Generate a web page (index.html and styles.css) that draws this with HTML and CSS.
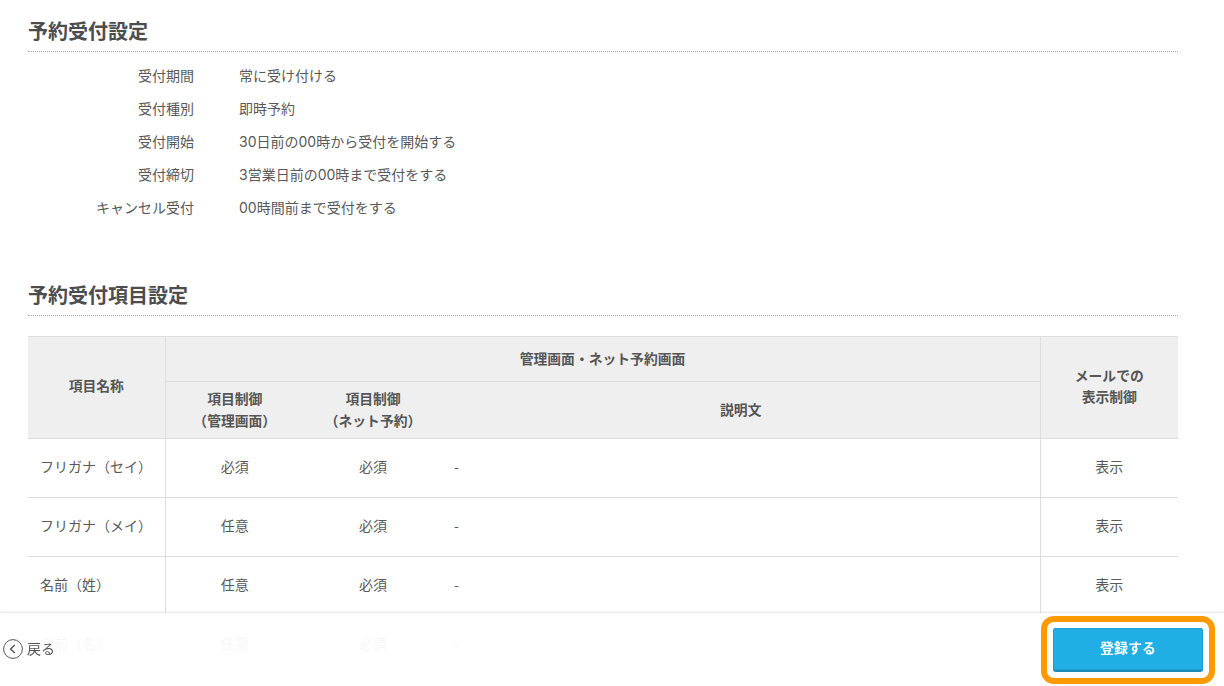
FILE: index.html
```html
<!DOCTYPE html>
<html lang="ja">
<head>
<meta charset="utf-8">
<title>予約受付設定</title>
<link rel="stylesheet" href="styles.css">
</head>
<body>
<main class="page">
  <section class="sec sec-first">
    <h2 class="heading">予約受付設定</h2>
    <dl class="settings">
      <div class="set-row"><dt>受付期間</dt><dd>常に受け付ける</dd></div>
      <div class="set-row"><dt>受付種別</dt><dd>即時予約</dd></div>
      <div class="set-row"><dt>受付開始</dt><dd>30日前の00時から受付を開始する</dd></div>
      <div class="set-row"><dt>受付締切</dt><dd>3営業日前の00時まで受付をする</dd></div>
      <div class="set-row"><dt>キャンセル受付</dt><dd>00時間前まで受付をする</dd></div>
    </dl>
  </section>
  <section class="sec sec-second">
    <h2 class="heading">予約受付項目設定</h2>
    <table class="items">
      <colgroup>
        <col class="c1"><col class="c2"><col class="c3"><col class="c4"><col class="c5">
      </colgroup>
      <thead>
        <tr class="h1">
          <th rowspan="2" class="rb pull">項目名称</th>
          <th colspan="3" class="rb raise">管理画面・ネット予約画面</th>
          <th rowspan="2" class="mail">メールでの<br>表示制御</th>
        </tr>
        <tr class="h2">
          <th class="raise two">項目制御<br>（管理画面）</th>
          <th class="raise two">項目制御<br>（ネット予約）</th>
          <th class="rb raise">説明文</th>
        </tr>
      </thead>
      <tbody>
        <tr><td class="name rb">フリガナ（セイ）</td><td>必須</td><td>必須</td><td class="desc rb">-</td><td>表示</td></tr>
        <tr><td class="name rb">フリガナ（メイ）</td><td>任意</td><td>必須</td><td class="desc rb">-</td><td>表示</td></tr>
        <tr><td class="name rb">名前（姓）</td><td>任意</td><td>必須</td><td class="desc rb">-</td><td>表示</td></tr>
        <tr><td class="name rb">名前（名）</td><td>任意</td><td>必須</td><td class="desc rb">-</td><td>表示</td></tr>
      </tbody>
    </table>
  </section>
</main>
<footer class="bar">
  <a class="back" href="#">
    <svg class="back-icon" width="20" height="20" viewBox="0 0 20 20" aria-hidden="true">
      <circle cx="10" cy="10" r="9.4" fill="none" stroke="#555" stroke-width="1"/>
      <path d="M11.8 6 L7.6 10 L11.8 14" fill="none" stroke="#555" stroke-width="1.4"/>
    </svg>
    <span class="back-label">戻る</span>
  </a>
  <div class="submit-wrap">
    <button class="submit" type="button">登録する</button>
  </div>
</footer>
</body>
</html>
```
FILE: styles.css
```css
* { box-sizing: border-box; }
html, body { margin: 0; height: 100%; overflow: hidden; background: #fff; }
body {
  font-family: "Noto Sans CJK JP", "Liberation Sans", sans-serif;
  font-size: 14px;
  color: #595959;
}
.page { padding: 0 46px 0 28px; }
.sec-first { padding-top: 18px; }
.sec-second { padding-top: 59px; }
.heading {
  margin: 0;
  height: 34px;
  font-size: 20px;
  line-height: 25px;
  font-weight: 700;
  color: #4d4d4d;
  border-bottom: 1px dotted #aaa;
}
.settings { margin: 6px 0 0; }
.set-row { display: flex; height: 33px; align-items: center; }
.set-row dt { width: 166px; text-align: right; }
.set-row dd {
  margin: 0 0 0 45px;
  font-family: Inter, "Noto Sans CJK JP", sans-serif;
}
.items {
  margin-top: 20px;
  width: 1150px;
  table-layout: fixed;
  border-collapse: collapse;
  border-top: 1px solid #ddd;
}
.c1 { width: 137px; }
.c2 { width: 139px; }
.c3 { width: 138px; }
.c4 { width: 598px; }
.c5 { width: 138px; }
th {
  background: #efefef;
  font-weight: 700;
  font-size: 13.8px;
  line-height: 25px;
  padding: 0;
  text-align: center;
  border-bottom: 1px solid #ddd;
  color: #555;
}
.h1 th { height: 45px; }
.h2 th { height: 57px; }
.pull { padding-bottom: 4px; }
th.raise { padding-bottom: 2px; }
th.two { line-height: 22px; }
th.mail { line-height: 21px; padding-bottom: 4px; }
td {
  height: 59px;
  padding: 0 0 4px;
  text-align: center;
  border-bottom: 1px solid #ddd;
}
.rb { border-right: 1px solid #ddd; }
td.name { text-align: left; padding-left: 12px; }
td.desc { text-align: left; padding-left: 12px; }
.bar {
  position: fixed;
  left: 0;
  right: 0;
  bottom: 0;
  height: 73px;
  display: flex;
  justify-content: space-between;
  align-items: flex-start;
  background: rgba(255, 255, 255, 0.95);
  box-shadow: 0 -1px 2px rgba(0, 0, 0, 0.1);
}
.back {
  display: flex;
  align-items: center;
  gap: 4px;
  margin: 26px 0 0 3px;
  color: #555;
  text-decoration: none;
  line-height: 20px;
}
.back-label { margin-top: -3px; }
.submit-wrap {
  margin: 3px 9px 0 0;
  padding: 6px;
  border: 6px solid #ff9900;
  border-radius: 13px;
  background: #fff;
}
.submit {
  display: block;
  width: 150px;
  height: 44px;
  padding: 0 0 4px;
  border: 0;
  border-bottom: 2px solid #1a8cb8;
  border-radius: 3px;
  background: #21aee5;
  box-shadow: inset 0 0 0 1px #1d9fd3;
  color: #fff;
  font-family: inherit;
  font-size: 14px;
  font-weight: 700;
}
```
